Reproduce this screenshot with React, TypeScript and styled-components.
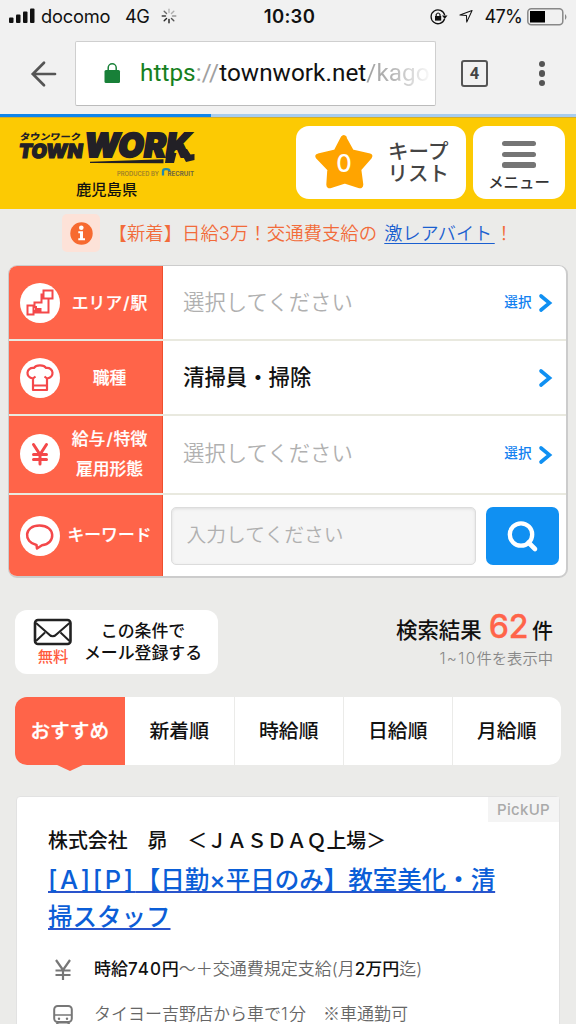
import React from 'react';
import styled, { createGlobalStyle } from 'styled-components';

const Global = createGlobalStyle`
  * { box-sizing: border-box; }
  html, body { margin: 0; padding: 0; }
  body {
    width: 576px; height: 1024px; overflow: hidden; background: #ebebe9; color: #111;
    font-family: Inter, "Noto Sans CJK JP", sans-serif;
  }
  p, h1, h2 { margin: 0; font-weight: inherit; }
  svg { display: block; flex: none; overflow: visible; }
`;

const Screen = styled.div`
  width: 576px; height: 1024px; overflow: hidden; display: flex; flex-direction: column;
`;

/* Text run with optional optical weight and tracking */
const Text = styled.span<{ $size: number; $lh?: number; $weight?: number; $color?: string; $track?: number; $stroke?: number }>`
  display: block;
  white-space: pre;
  font-size: ${p => p.$size}px;
  line-height: ${p => p.$lh ?? p.$size * 1.3}px;
  font-weight: ${p => p.$weight ?? 400};
  color: ${p => p.$color ?? '#111'};
  letter-spacing: ${p => p.$track ?? 0}px;
  -webkit-text-stroke: ${p => p.$stroke ?? 0}px currentColor;
`;

/* ---------- Status bar ---------- */
const StatusBar = styled.div`
  height: 33px; flex: none; background: #f1f1f1; display: flex; align-items: center;
  padding: 0 8px 0 9px;
`;
const StatusSide = styled.div<{ $end?: boolean }>`
  flex: 1; display: flex; align-items: center; justify-content: ${p => (p.$end ? 'flex-end' : 'flex-start')};
`;
const Carrier = styled.div`margin-left: 6px; width: 84px;`;
const Network = styled.div`width: 36px;`;
const Clock = styled.div`padding-left: 2px;`;
const LocationIcon = styled.div`margin-left: 11px;`;
const Percent = styled.div`margin: 0 5px 0 11px;`;

/* ---------- Browser toolbar ---------- */
const Toolbar = styled.div`
  height: 81px; flex: none; background: #f1f1f1; display: flex; align-items: flex-start; padding: 8px 0 0 30px;
`;
const BackIcon = styled.div`width: 45px; padding-top: 20px;`;
const UrlBox = styled.div`
  width: 361px; height: 65px; background: #fff; border: 1px solid #cfcfcf; border-bottom-color: #bbb; border-radius: 2px;
  display: flex; align-items: center; padding-left: 28px; overflow: hidden;
`;
const Url = styled.div`
  margin: -1px 0 0 19px; width: 292px; overflow: hidden; white-space: nowrap;
  font: 400 24.3px/34px Roboto, sans-serif; color: #111;
  letter-spacing: 0.05px;
`;
const Scheme = styled.span`color: #168021;`;
const Muted = styled.span`color: #a0a0a0;`;
const Path = styled.span`
  background: linear-gradient(90deg, #a0a0a0 0, #b5b5b5 40%, #fff 105%);
  background-clip: text; -webkit-background-clip: text; color: transparent;
`;
const TabCount = styled.div`
  width: 27px; height: 27px; margin: 19px 0 0 25px; border: 2.5px solid #555; border-radius: 3px;
  font: 700 16.5px/23px Roboto, sans-serif; color: #444; text-align: center;
`;
const MenuDots = styled.div`
  margin: 20px 0 0 51px; display: flex; flex-direction: column; gap: 3px;
`;
const Dot = styled.i`width: 6.4px; height: 6.4px; border-radius: 50%; background: #555;`;
const Progress = styled.div`
  height: 3px; flex: none; background: linear-gradient(90deg, #1086ec 211px, #a8cdee 211px);
`;

/* ---------- Site header ---------- */
const Header = styled.header`
  height: 92px; flex: none; background: #fcca03; border-top: 1px solid #d2ad2e; display: flex; align-items: flex-start;
`;
const Brand = styled.div`width: 296px; padding: 11px 0 0 16px;`;
const Region = styled.div`padding-left: 60px; margin-top: -4px;`;
const HeaderButton = styled.button<{ $w: number; $column?: boolean }>`
  width: ${p => p.$w}px; height: 73px; margin: 8px 7.5px 0 0; padding: 0; border: 0; border-radius: 13px; background: #fff;
  display: flex; flex-direction: ${p => (p.$column ? 'column' : 'row')}; align-items: center;
  font-family: inherit;
`;
const KeepStar = styled.div`margin: -1px 13.5px 0 18px;`;
const Bars = styled.div`
  margin: 15px 0 7px; width: 34px; display: flex; flex-direction: column; gap: 5.5px;
`;
const Bar = styled.i`height: 5.2px; border-radius: 2.5px; background: #757575;`;

/* ---------- Notice ---------- */
const Notice = styled.div`
  height: 56px; flex: none; display: flex; align-items: flex-start; padding: 5px 0 0 62px;
`;
const InfoBox = styled.div`
  width: 38px; height: 38px; border-radius: 5px; background: #fde2d8; display: grid; place-items: center;
`;
const NoticeText = styled.p`
  margin: 6px 0 0 8.5px; white-space: pre; font-size: 18.4px; line-height: 26px; font-weight: 350; color: #f26b3a;
`;
const NoticeLink = styled.a`
  color: #1a5fd0; font-size: 18.1px; margin-left: 2px; word-spacing: -2.5px;
  text-decoration: underline 1px; text-underline-offset: 2.5px; text-decoration-skip-ink: none;
`;

/* ---------- Search form ---------- */
const SearchForm = styled.section`
  margin: 0 8px; flex: none; height: 313px; border: 2px solid #ccc; border-width: 1.5px 2px 2px 1px; border-radius: 9px;
  background: #fff; overflow: hidden; display: flex; flex-direction: column;
`;
const FormRow = styled.div<{ $h: number }>`
  height: ${p => p.$h}px; flex: none; display: flex;
  & + & { border-top: 2px solid #e9e9df; }
`;
const LabelCell = styled.div`
  width: 154px; flex: none; background: #ff6449; border-right: 1px solid #ee4f2e; display: flex; align-items: center; padding-left: 11px;
`;
const LabelIcon = styled.div`
  width: 40px; height: 40px; flex: none; border-radius: 50%; background: #fff; display: grid; place-items: center;
`;
const LabelText = styled.div`
  width: 99px; display: flex; flex-direction: column; align-items: center;
`;
const Slash = styled.span`letter-spacing: 1px; margin-left: 1px;`;
const ValueCell = styled.div`
  flex: 1; display: flex; align-items: center; padding: 0 13px 0 20px;
`;
const Value = styled.div`flex: 1;`;
const Chevron = styled.div`margin: 1px 0 0 7.5px;`;
const KeywordCell = styled.div`
  flex: 1; display: flex; align-items: flex-start; padding: 12.5px 0 0 7.5px; gap: 10px;
`;
const KeywordField = styled.div`
  width: 305px; height: 58px; border: 1.5px solid #dcdcdc; border-radius: 5px; background: #f5f5f5;
  box-shadow: inset 0 1px 3px #ddd; padding-left: 15px; display: flex; align-items: center;
`;
const SearchButton = styled.button`
  width: 73px; height: 58px; padding: 0; border: 0; border-radius: 7px; background: #1090f2; display: grid; place-items: center;
`;

/* ---------- Result summary ---------- */
const Summary = styled.section`
  height: 119px; flex: none; display: flex; justify-content: space-between; align-items: flex-start; padding: 32px 23px 0 15px;
`;
const MailButton = styled.button`
  width: 203px; height: 64px; padding: 0; border: 0; border-radius: 12px; background: #fff; font-family: inherit; display: flex; align-items: center;
`;
const MailIcon = styled.div`margin: 1px 0 0 18px; width: 40px; display: flex; flex-direction: column; align-items: center;`;
const MailLabel = styled.div`flex: 1; padding-right: 5px; display: flex; flex-direction: column; align-items: center;`;
const Counts = styled.div`margin-top: -3px; display: flex; flex-direction: column; align-items: flex-end;`;
const Total = styled.div`display: flex; align-items: baseline; height: 42px;`;
const Number = styled.div`margin: 0 3.5px 0 7px;`;
const WideDigits = styled.span<{ $track?: number }>`letter-spacing: ${p => p.$track ?? 1.4}px;`;

/* ---------- Sort tabs ---------- */
const Tabs = styled.nav`
  margin: 0 15px; height: 68px; flex: none; display: grid; gap: 1.5px;
  grid-template-columns: 108.5px 108.5px 107.5px 107.5px 107.5px;
`;
const Tab = styled.a<{ $active?: boolean }>`
  position: relative; display: flex; align-items: center; justify-content: center; padding-top: 1px; background: ${p => (p.$active ? '#ff6449' : '#fff')};
  &:first-child { border-radius: 12px 0 0 12px; margin-right: -1px; }
  &:last-child { border-radius: 0 12px 12px 0; }
`;
const TabPointer = styled.i`
  position: absolute; top: 67px; left: 40px; border: 15px solid transparent; border-top: 7px solid #ff6449; border-bottom: 0;
`;

/* ---------- Job card ---------- */
const JobCard = styled.article`
  position: relative; margin: 31px 16px 0 16px; flex: none; height: 240px; background: #fff; border: 1px solid #e2e2e2; border-radius: 4px; padding: 29px 0 0 31px;
`;
const PickUp = styled.div`
  position: absolute; top: 0; right: 0; width: 71px; height: 25px; background: #f4f4f4; display: grid; place-items: center;
`;
const JobTitle = styled.a`
  display: block; margin: 5.5px 0 11px; font-size: 24.5px; line-height: 37px; font-weight: 500; color: #0b5ed7; white-space: pre;
  text-decoration: underline 1.5px #2a54cc; text-underline-offset: 1.5px; text-decoration-skip-ink: none;
`;
const TitleLine = styled.span`display: block;`;
const TitleCodes = styled.span`font-size: 25.5px; letter-spacing: 2.6px; line-height: 30px;`;
const Detail = styled.div`display: flex; align-items: center; height: 45px;`;
const DetailIcon = styled.div`width: 46px; padding: 2px 0 0 5px;`;
const Strong = styled.b`font-weight: 500; color: #111;`;
const Kome = styled.span`font-family: "Noto Sans CJK JP", sans-serif;`;

const BLUE = '#1090f2';
const RED = '#f4484a';

const Arrow = () => (
  <Chevron>
    <svg width="14" height="18" viewBox="0 0 14 18"><path d="M2 2L10.500 9L2 16" fill="none" stroke={BLUE} strokeWidth="3.600" strokeLinecap="round" /></svg>
  </Chevron>
);

const Logo = () => (
  <svg width="184" height="54" viewBox="0 0 184 54">
    <g fill="#222026" fontWeight="900">
      <text x="4" y="11.500" fontSize="9" textLength="61" lengthAdjust="spacingAndGlyphs" fontFamily="Noto Sans CJK JP, sans-serif" transform="skewX(-8) translate(1 0)">タウンワーク</text>
      <text x="4" y="29" fontSize="19.500" textLength="64" lengthAdjust="spacingAndGlyphs" fontFamily="Inter, sans-serif" transform="skewX(-8) translate(2 0)" stroke="#222026" strokeWidth="1.200">TOWN</text>
      <text x="69" y="27.500" fontSize="33" textLength="107" lengthAdjust="spacingAndGlyphs" fontFamily="Inter, sans-serif" transform="skewX(-9) translate(2 0)" stroke="#222026" strokeWidth="1.800">WORK</text>
      <path d="M74 32.800L147.500 30.300V34.200L74 34ZM150.500 24H160.500L158 34H149ZM163 20L171 20L174.500 25.500L178.500 25L178.500 31L170 33Z" />
    </g>
    <text x="101" y="46.500" fontSize="5.500" textLength="42" lengthAdjust="spacingAndGlyphs" fontFamily="Inter, sans-serif" fill="#9d7f28" fontWeight="600">PRODUCED BY</text>
    <path d="M147 46.500V42.500Q147 40.200 149.500 40.200H150.500Q153.500 40.200 153.500 42.300" fill="none" stroke="#2389ad" strokeWidth="2.300" />
    <text x="151.500" y="46.500" fontSize="5.800" textLength="26.500" lengthAdjust="spacingAndGlyphs" fontFamily="Inter, sans-serif" fill="#6f6640" fontWeight="700">RECRUIT</text>
  </svg>
);

const SelectRow = ({ h, icon, labels, value, filled, link }: { h: number; icon: React.ReactNode; labels: React.ReactNode[]; value: string; filled?: boolean; link?: boolean }) => (
  <FormRow $h={h}>
    <LabelCell>
      <LabelIcon>{icon}</LabelIcon>
      <LabelText>
        {labels.map((l, i) => <Text key={i} $size={16.8} $lh={30} $weight={500} $stroke={0.2} $color="#fff">{l}</Text>)}
      </LabelText>
    </LabelCell>
    <ValueCell>
      <Value><Text $size={21.4} $weight={filled ? 500 : 350} $color={filled ? '#111' : '#b0b0b0'}>{value}</Text></Value>
      {link && <Text $size={13.6} $weight={500} $color="#1080f0">選択</Text>}
      <Arrow />
    </ValueCell>
  </FormRow>
);

export default function App() {
  return (
    <Screen>
      <Global />
      <StatusBar>
        <StatusSide>
          <svg width="26" height="16" viewBox="0 0 26 16" fill="#111"><rect x="0" y="9.500" width="4.500" height="5.500" rx="1" /><rect x="7" y="6.500" width="4.500" height="8.500" rx="1" /><rect x="14" y="3.500" width="4.500" height="11.500" rx="1" /><rect x="21" y="0.500" width="4.500" height="14.500" rx="1" /></svg>
          <Carrier><Text $size={18.3} $track={-0.2}>docomo</Text></Carrier>
          <Network><Text $size={18.2} $track={-0.5}>4G</Text></Network>
          <svg width="16" height="16" viewBox="-8 -8 16 16">
            {[0.95, 0.9, 0.8, 0.6, 0.25, 0.3, 0.4, 0.7].map((o, i) => (
              <path key={i} d="M0 3.500V6.800" stroke="#111" strokeOpacity={o} strokeWidth="1.400" strokeLinecap="round" transform={`rotate(${i * 45})`} />
            ))}
          </svg>
        </StatusSide>
        <Clock><Text $size={18.5} $weight={600} $track={0.3}>10:30</Text></Clock>
        <StatusSide $end>
          <svg width="18" height="16" viewBox="0 0 18 16"><path d="M14.600 9.800A6.900 6.900 0 1 1 14.700 6.200" fill="none" stroke="#111" strokeWidth="1.300" /><path d="M12 6.500H17.500L14.800 10Z" fill="#111" /><rect x="5" y="7" width="6.200" height="4.600" fill="#111" /><path d="M6.200 7.500V5.500Q8.100 2.500 10 5.500V7.500" fill="none" stroke="#111" strokeWidth="1.200" /></svg>
          <LocationIcon><svg width="14" height="15" viewBox="0 0 15 15"><path d="M1 6L14 1L8.300 13.500L8 6.500Z" fill="none" stroke="#111" strokeWidth="1.100" strokeLinejoin="round" /></svg></LocationIcon>
          <Percent><Text $size={18.2} $track={-0.8}>47%</Text></Percent>
          <svg width="41" height="18" viewBox="0 0 41 18"><rect x="0.800" y="0.800" width="35" height="16" rx="3.500" fill="none" stroke="#888" strokeWidth="1.500" /><rect x="3" y="3" width="15" height="11.500" fill="#000" /><path d="M38 6Q41 9 38 12Z" fill="#888" /></svg>
        </StatusSide>
      </StatusBar>

      <Toolbar>
        <BackIcon><svg width="27" height="26" viewBox="0 0 27 26"><path d="M14 1.800L2.800 13L14 24.200M3 13H25" fill="none" stroke="#555" strokeWidth="2.700" strokeLinecap="round" /></svg></BackIcon>
        <UrlBox>
          <svg width="17" height="21" viewBox="0 0 17 21"><rect x="0.500" y="7" width="15.500" height="13" rx="1.500" fill="#188038" /><path d="M4.200 8V4.800a4 4 0 0 1 8 0V8" fill="none" stroke="#188038" strokeWidth="1.500" /></svg>
          <Url><Scheme>https</Scheme><Muted>://</Muted>townwork.net<Path>/kago</Path></Url>
        </UrlBox>
        <TabCount>4</TabCount>
        <MenuDots><Dot /><Dot /><Dot /></MenuDots>
      </Toolbar>
      <Progress />

      <Header>
        <Brand>
          <Logo />
          <Region><Text $size={15.3} $lh={22} $weight={500}>鹿児島県</Text></Region>
        </Brand>
        <HeaderButton $w={169.5}>
          <KeepStar>
            <svg width="60" height="56" viewBox="0 0 60 56">
              <path d="M30 4L37.500 17.500L55 21.500Q57 22 55.500 24L45 36L47 51Q47 54 44 53L30 48.500L16 53Q13 54 13 51L14 36L2.500 24Q1 22 3.500 21.500L20.500 17.500L27.500 4Q29 2 30.500 4Z" fill="#ffa400" stroke="#ffa400" strokeWidth="3" strokeLinejoin="round" transform="translate(.8 -.5)" />
              <text x="30" y="38" textAnchor="middle" fontFamily="Inter, sans-serif" fontSize="24" fontWeight="500" fill="#fff">0</text>
            </svg>
          </KeepStar>
          <div>
            <Text $size={20.5} $lh={22} $weight={500} $color="#444">キープ</Text>
            <Text $size={20.5} $lh={22} $weight={500} $color="#444">リスト</Text>
          </div>
        </HeaderButton>
        <HeaderButton $w={92} $column>
          <Bars><Bar /><Bar /><Bar /></Bars>
          <Text $size={15.4} $lh={16} $weight={500} $color="#333">メニュー</Text>
        </HeaderButton>
      </Header>

      <Notice>
        <InfoBox>
          <svg width="23" height="23" viewBox="0 0 23 23"><circle cx="11.500" cy="11.500" r="11.200" fill="#f76a30" /><circle cx="11.300" cy="5.800" r="2.300" fill="#fff" /><path d="M8.300 9.300H13V16.200H15V18.300H8.300V16.200H10V11.200H8.300Z" fill="#fff" /></svg>
        </InfoBox>
        <NoticeText>【新着】日給3万！交通費支給の <NoticeLink>激レアバイト </NoticeLink>！</NoticeText>
      </Notice>

      <SearchForm>
        <SelectRow h={73} labels={[<>エリア<Slash>/</Slash>駅</>]} value="選択してください" link icon={
          <svg width="28" height="27" viewBox="0 0 28 27"><path d="M17.500 1.500H26.500V9.500H17.500ZM1.500 16.500H7.500V25.500H1.500ZM17.500 5.500H15.500V13.500H8.500V17M7.500 18H10V20H14.500V22H7.500M7.500 23.500H22.500V9.500" fill="none" stroke={RED} strokeWidth="2" /></svg>} />
        <SelectRow h={75} labels={['職種']} value="清掃員・掃除" filled icon={
          <svg width="28" height="28" viewBox="0 0 28 28"><path d="M7 26V14.500C-1 13.500 0 3 8 4C10 .5 18 .5 20 4C28 3 29 13.500 21 14.500V26ZM7 21.500H21M9.500 12.500L7 14.500M18.500 12.500L21 14.500" fill="none" stroke={RED} strokeWidth="2.200" strokeLinejoin="round" /></svg>} />
        <SelectRow h={78.5} labels={[<>給与<Slash>/</Slash>特徴</>, '雇用形態']} value="選択してください" link icon={
          <svg width="20" height="24" viewBox="0 0 20 24"><path d="M3.500 2.500L10 12.500L16.500 2.500M10 12.500V22M3.500 12.500H16.500M3.500 17.500H16.500" fill="none" stroke={RED} strokeWidth="3" strokeLinecap="round" /></svg>} />
        <FormRow $h={84.5}>
          <LabelCell>
            <LabelIcon><svg width="30" height="28" viewBox="0 0 30 28"><path d="M11.500 23C-2 20 -1 3.500 14.500 3.500C31 3.500 31 22 17 23.200L12 26.500Z" fill="none" stroke={RED} strokeWidth="2.500" strokeLinejoin="round" /></svg></LabelIcon>
            <LabelText><Text $size={16.8} $weight={500} $stroke={0.2} $color="#fff">キーワード</Text></LabelText>
          </LabelCell>
          <KeywordCell>
            <KeywordField><Text $size={19.8} $weight={350} $color="#b0b0b0">入力してください</Text></KeywordField>
            <SearchButton><svg width="31" height="32" viewBox="0 0 31 32"><circle cx="14" cy="14.500" r="11.200" fill="none" stroke="#fff" strokeWidth="4.300" /><path d="M21.500 22.500L28 29" stroke="#fff" strokeWidth="4.600" strokeLinecap="round" /></svg></SearchButton>
          </KeywordCell>
        </FormRow>
      </SearchForm>

      <Summary>
        <MailButton>
          <MailIcon>
            <svg width="40" height="28" viewBox="0 0 40 28"><rect x="2" y="2" width="35.500" height="24" rx="3" fill="none" stroke="#222" strokeWidth="2.600" /><path d="M3 5L15 15.500Q19.700 21 24.500 15.500L36.500 5M3 23L12 14.500M36.500 23L27.500 14.500" fill="none" stroke="#222" strokeWidth="2" /></svg>
            <Text $size={15.3} $lh={22} $weight={500} $color="#ff5a3c">無料</Text>
          </MailIcon>
          <MailLabel>
            <Text $size={16.9} $lh={22} $weight={500}>この条件で</Text>
            <Text $size={16.9} $lh={22} $weight={500}>メール登録する</Text>
          </MailLabel>
        </MailButton>
        <Counts>
          <Total>
            <Text $size={21.4} $weight={500}>検索結果</Text>
            <Number><Text $size={32} $lh={40} $weight={500} $color="#ff6449" $stroke={0.3}>62</Text></Number>
            <Text $size={21} $weight={500}>件</Text>
          </Total>
          <Text $size={15.3} $lh={20} $weight={350} $color="#888"><WideDigits>1~10</WideDigits>件を表示中</Text>
        </Counts>
      </Summary>

      <Tabs>
        <Tab $active><Text $size={19.7} $weight={500} $stroke={0.3} $color="#fff">おすすめ</Text><TabPointer /></Tab>
        {['新着順', '時給順', '日給順', '月給順'].map(t => <Tab key={t}><Text $size={19.8} $weight={500}>{t}</Text></Tab>)}
      </Tabs>

      <JobCard>
        <PickUp><Text $size={15} $lh={18} $weight={500} $color="#aaa" $track={0.3}>PickUP</Text></PickUp>
        <Text $size={19.9} $lh={30} $weight={500}>株式会社　昴　＜ＪＡＳＤＡＱ上場＞</Text>
        <JobTitle>
          <TitleLine><TitleCodes>[A][P]</TitleCodes>【日勤×平日のみ】教室美化・清</TitleLine>
          <TitleLine>掃スタッフ</TitleLine>
        </JobTitle>
        <Detail>
          <DetailIcon><svg width="20" height="22" viewBox="0 0 20 22"><path d="M3 1L10 11L17 1M10 11V21M2.500 11.500H17.500M2.500 16H17.500" fill="none" stroke="#777" strokeWidth="2.200" /></svg></DetailIcon>
          <Text $size={17} $weight={350} $color="#666"><Strong>時給<WideDigits $track={1}>740</WideDigits>円</Strong>～＋交通費規定支給(月<Strong>2万円</Strong>迄)</Text>
        </Detail>
        <Detail>
          <DetailIcon><svg width="20" height="24" viewBox="0 0 20 24"><rect x="1.200" y="3" width="17.600" height="16" rx="3.500" fill="none" stroke="#777" strokeWidth="2" /><path d="M1 12H19" stroke="#777" strokeWidth="1.500" /><circle cx="6" cy="15.700" r="1.200" fill="#777" /><circle cx="14" cy="15.700" r="1.200" fill="#777" /><path d="M5 19L3 23M15 19L17 23M4 21.500H16" stroke="#777" strokeWidth="2" /></svg></DetailIcon>
          <Text $size={17} $weight={350} $color="#666">タイヨー吉野店から車で<WideDigits>1</WideDigits>分　<Kome>※</Kome>車通勤可</Text>
        </Detail>
      </JobCard>
    </Screen>
  );
}
